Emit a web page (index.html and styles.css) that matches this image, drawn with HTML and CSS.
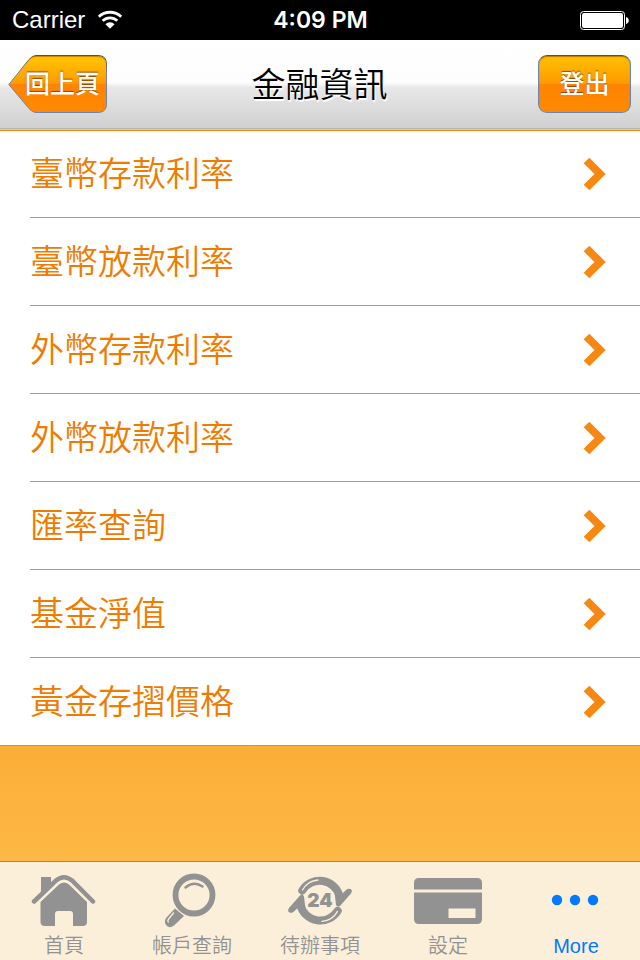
FILE: index.html
```html
<!DOCTYPE html>
<html lang="zh-Hant">
<head>
    <meta charset="UTF-8">
    <meta name="viewport" content="width=device-width, initial-scale=1.0">
    <title>金融資訊</title>
    <link rel="stylesheet" href="styles.css">
</head>
<body>
    <!-- 狀態列 -->
    <div class="status-bar">
        <div class="carrier">
            <span>Carrier</span>
            <svg class="wifi" width="26" height="20" viewBox="0 0 26 20" aria-hidden="true">
                <path d="M1.8 6.8a16 16 0 0 1 22.4 0M5.7 10.8a10.4 10.4 0 0 1 14.6 0" fill="none" stroke="#fff" stroke-width="2.8"/>
                <path d="M8.4 14.2a6.6 6.6 0 0 1 9.2 0L13 18.8z" fill="#fff"/>
            </svg>
        </div>
        <div class="clock">4:09 PM</div>
        <svg class="battery" width="49" height="19" viewBox="0 0 49 19" aria-hidden="true">
            <rect x="0.5" y="0.5" width="44" height="18" rx="3" fill="none" stroke="#fff"/>
            <rect x="2" y="2" width="41" height="15" rx="2" fill="#fff"/>
            <path d="M46 6a3.6 3.6 0 0 1 0 7z" fill="#fff"/>
        </svg>
    </div>

    <!-- 標題列 -->
    <header class="nav-bar">
        <button class="nav-button back" type="button">
            <svg class="back-shape" width="99" height="58" viewBox="0 0 99 58" aria-hidden="true">
                <defs>
                    <linearGradient id="orange" x1="0" y1="0" x2="0" y2="1">
                        <stop offset="0" stop-color="#fb0"/>
                        <stop offset="0.08" stop-color="#ffc000"/>
                        <stop offset="0.49" stop-color="#ff9a00"/>
                        <stop offset="0.5" stop-color="#ff8400"/>
                        <stop offset="1" stop-color="#ff8a00"/>
                    </linearGradient>
                    <linearGradient id="edge" x1="0" y1="0" x2="0" y2="1">
                        <stop offset="0" stop-color="#704a1c"/>
                        <stop offset="0.3" stop-color="#7883a0"/>
                        <stop offset="1" stop-color="#6a86b4"/>
                    </linearGradient>
                </defs>
                <path d="M0.8 29.5L21 4.5Q24.500 0.500 28 0.500H90Q98.500 0.500 98.500 9V49Q98.500 57.500 90 57.500H28Q24.500 57.500 21 53.500Z" fill="url(#orange)" stroke="url(#edge)"/>
                <path d="M24 2.500Q26 1.500 28 1.500H90Q95 1.500 97 5" fill="none" stroke="#a86800" stroke-opacity="0.600"/>
            </svg>
            <span class="back-text">回上頁</span>
        </button>
        <h1 class="title">金融資訊</h1>
        <button class="nav-button logout" type="button">登出</button>
    </header>

    <!-- 選單 -->
    <main class="main">
        <ul class="menu">
            <li><a href="#">臺幣存款利率<svg class="arrow" width="24" height="34" viewBox="0 0 24 34" aria-hidden="true"><path d="M3.500 3.500L17 17L3.500 30.500"/></svg></a></li>
            <li><a href="#">臺幣放款利率<svg class="arrow" width="24" height="34" viewBox="0 0 24 34" aria-hidden="true"><path d="M3.500 3.500L17 17L3.500 30.500"/></svg></a></li>
            <li><a href="#">外幣存款利率<svg class="arrow" width="24" height="34" viewBox="0 0 24 34" aria-hidden="true"><path d="M3.500 3.500L17 17L3.500 30.500"/></svg></a></li>
            <li><a href="#">外幣放款利率<svg class="arrow" width="24" height="34" viewBox="0 0 24 34" aria-hidden="true"><path d="M3.500 3.500L17 17L3.500 30.500"/></svg></a></li>
            <li><a href="#">匯率查詢<svg class="arrow" width="24" height="34" viewBox="0 0 24 34" aria-hidden="true"><path d="M3.500 3.500L17 17L3.500 30.500"/></svg></a></li>
            <li><a href="#">基金淨值<svg class="arrow" width="24" height="34" viewBox="0 0 24 34" aria-hidden="true"><path d="M3.500 3.500L17 17L3.500 30.500"/></svg></a></li>
            <li><a href="#">黃金存摺價格<svg class="arrow" width="24" height="34" viewBox="0 0 24 34" aria-hidden="true"><path d="M3.500 3.500L17 17L3.500 30.500"/></svg></a></li>
        </ul>
    </main>

    <!-- 底部分頁 -->
    <nav class="tab-bar">
        <a class="tab" href="#">
            <svg width="72" height="56" viewBox="0 0 72 56" aria-hidden="true">
                <path d="M13 21V5H23V12Z" fill="currentColor"/>
                <path d="M6 29.500L28 8.500Q36 2 44 8.500L65 29.500" fill="none" stroke="currentColor" stroke-width="4.500" stroke-linecap="round"/>
                <path d="M12.500 30L31 12.500Q36 8.500 41 12.500L59 30V50Q59 54 55 54H45V42Q45 39 42 39H30Q27 39 27 42V54H17Q12.500 54 12.500 50Z" fill="currentColor"/>
            </svg>
            首頁
        </a>
        <a class="tab" href="#">
            <svg width="72" height="56" viewBox="0 0 72 56" aria-hidden="true">
                <circle cx="38" cy="23" r="18.500" fill="none" stroke="currentColor" stroke-width="5.800"/>
                <path d="M29.500 15.500Q38 8.500 46.500 14.500" fill="none" stroke="currentColor" stroke-width="2.500" stroke-linecap="round"/>
                <path d="M19 36.500L28 44L18 53.500Q13 57 10 53Q7.500 49 10.500 45.500Z" fill="currentColor"/>
                <path d="M17.500 41L13 46.500Q11 49 12.500 50" fill="none" stroke="#fcefd9" stroke-width="1.300" stroke-linecap="round"/>
            </svg>
            帳戶查詢
        </a>
        <a class="tab" href="#">
            <svg width="72" height="56" viewBox="0 0 72 56" aria-hidden="true">
                <g id="half">
                    <path d="M18.300 18.500A20.500 20.500 0 0 1 55.500 24" fill="none" stroke="currentColor" stroke-width="8" stroke-linecap="round"/>
                    <path d="M50.500 20L52 33Q53.500 36 56 34L67 21.500Q69 18.500 66.500 17Q64 16 62 18L59 21Z" fill="currentColor"/>
                    <path d="M18.500 18C22 11.500 28 8.500 34 8" fill="none" stroke="#fcefd9" stroke-width="1.300" stroke-linecap="round"/>
                </g>
                <use href="#half" transform="rotate(180 36 28.700)"/>
                <text class="hours" x="36" y="35" text-anchor="middle">24</text>
            </svg>
            待辦事項
        </a>
        <a class="tab" href="#">
            <svg width="72" height="56" viewBox="0 0 72 56" aria-hidden="true">
                <path d="M2 17.500V11Q2 6 7 6H65Q70 6 70 11V17.500Z" fill="currentColor"/>
                <path d="M2 20.500H70V47Q70 52 65 52H7Q2 52 2 47ZM36.500 36.500V46H63.500V36.500Z" fill="currentColor" fill-rule="evenodd"/>
            </svg>
            設定
        </a>
        <a class="tab active" href="#">
            <svg width="72" height="56" viewBox="0 0 72 56" aria-hidden="true">
                <circle cx="17" cy="28" r="5.200" fill="currentColor"/>
                <circle cx="35" cy="28" r="5.200" fill="currentColor"/>
                <circle cx="53" cy="28" r="5.200" fill="currentColor"/>
            </svg>
            More
        </a>
    </nav>
</body>
</html>
```
FILE: styles.css
```css
* {
    margin: 0;
    padding: 0;
    box-sizing: border-box;
}

body {
    display: flex;
    flex-direction: column;
    min-height: 100vh;
    font-family: "Liberation Sans", "Noto Sans CJK TC", sans-serif;
    background: #fff;
}

a {
    text-decoration: none;
}

/* 狀態列 */
.status-bar {
    display: grid;
    grid-template-columns: 1fr auto 1fr;
    align-items: center;
    height: 40px;
    padding: 0 11px 0 12px;
    background: #000;
    color: #fff;
}

.carrier {
    display: flex;
    align-items: center;
    gap: 12px;
    font-size: 24px;
}

.clock {
    font-family: Inter, "Liberation Sans", sans-serif;
    font-size: 23px;
    font-weight: 600;
}

.battery {
    justify-self: end;
}

/* 標題列 */
.nav-bar {
    position: relative;
    display: grid;
    grid-template-columns: 1fr auto 1fr;
    align-items: center;
    height: 90px;
    padding: 0 9px 2px 8px;
    background: linear-gradient(180deg, #fff 0%, #fdfdfd 48%, #e8e8e8 53%, #cfcfcf 100%);
    border-bottom: 1px solid #ffc94a;
    box-shadow: inset 0 -1px #b4b8bc, 0 1px #f98813;
}

.nav-button {
    height: 58px;
    padding-bottom: 4px;
    border: none;
    color: #fff;
    font-family: "Noto Sans CJK TC", sans-serif;
    font-size: 25px;
    font-weight: 500;
    text-shadow: 0 -1px 1px rgba(120, 50, 0, 0.8);
}

.back {
    display: grid;
    align-items: center;
    width: 99px;
    padding-bottom: 0;
    background: none;
}

.back-shape,
.back-text {
    grid-area: 1 / 1;
}

.back-text {
    padding: 0 0 4px 10px;
}

.logout {
    justify-self: end;
    width: 93px;
    border: 1px solid #6a86b4;
    border-top-color: #704a1c;
    border-radius: 9px;
    background: linear-gradient(180deg, #ffc000 0%, #ff9a00 49%, #ff8400 50%, #ff8a00 100%);
    box-shadow: inset 0 1px 1px rgba(130, 80, 0, 0.6);
}

.title {
    padding-bottom: 2px;
    color: #000;
    font-family: "Noto Sans CJK TC", sans-serif;
    font-size: 34px;
    font-weight: 350;
    line-height: 50px;
    text-shadow: 1px 2px 1px #fff;
}

/* 選單 */
.main {
    flex: 1;
    background: linear-gradient(180deg, #fbae38 0, #fbae38 616px, #feb845 100%);
}

.menu {
    list-style: none;
    padding-left: 30px;
    background: #fff;
    border-bottom: 1px solid #e38d22;
}

.menu a {
    display: flex;
    align-items: center;
    justify-content: space-between;
    height: 88px;
    padding: 0 33px 4px 0;
    border-bottom: 1px solid #f98813;
    color: #ef7c00;
    font-size: 34px;
    font-weight: 350;
}

.menu li:last-child a {
    height: 87px;
    border-bottom: none;
}

.arrow {
    margin-top: 4px;
}

.arrow path {
    fill: none;
    stroke: #f98813;
    stroke-width: 8;
}

/* 底部分頁 */
.tab-bar {
    display: flex;
    height: 99px;
    padding-top: 10px;
    background: #fcefd9;
    border-top: 1px solid #b87f2c;
}

.tab {
    flex: 1;
    display: flex;
    flex-direction: column;
    align-items: center;
    gap: 4px;
    color: #929292;
    font-size: 20px;
    font-weight: 350;
    line-height: 28px;
}

.active {
    color: #007aff;
}

.hours {
    fill: currentColor;
    font-family: Inter, "Liberation Sans", sans-serif;
    font-size: 19px;
    font-weight: 900;
}
```
